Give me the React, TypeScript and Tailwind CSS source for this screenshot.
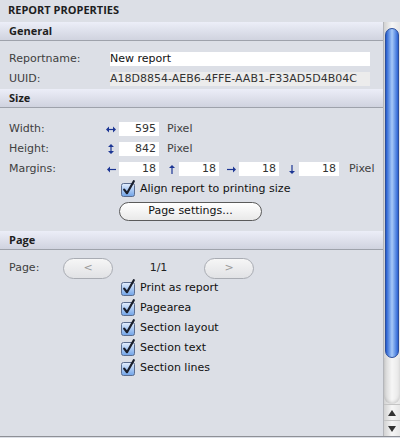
import React from 'react';

const Header = ({ title }: { title: string }) => (
  <div className="h-[19px] flex items-center px-[9px] bg-linear-to-b from-[#eceef8] to-[#d0d3df] border-b border-[#9ea2ab] font-bold text-[#1e1e1e] [font-family:'Open_Sans',sans-serif]">
    {title}
  </div>
);

const Label = ({ children }: { children: React.ReactNode }) => (
  <div className="w-[110px] shrink-0 pl-[9px] text-[#404040]">{children}</div>
);

const Field = ({ value, w }: { value: string; w: string }) => (
  <div className={`${w} h-[14px] bg-white text-right pr-[3px] leading-[14px] text-[#333]`}>{value}</div>
);

const ArrowIcon = ({ dir }: { dir: 'h' | 'v' | 'l' | 'u' | 'r' | 'd' }) => {
  const c = '#1c3694';
  if (dir === 'h')
    return (
      <svg width="10" height="7" viewBox="0 0 10 7">
        <path d="M1 3.5h8" stroke={c} strokeWidth="1.2" />
        <path d="M0 3.5l3-3v6zM10 3.5l-3-3v6z" fill={c} />
      </svg>
    );
  if (dir === 'v')
    return (
      <svg width="6" height="10" viewBox="0 0 6 10">
        <path d="M3 1v8" stroke={c} strokeWidth="1.2" />
        <path d="M3 0l3 3H0zM3 10l3-3H0z" fill={c} />
      </svg>
    );
  if (dir === 'l')
    return (
      <svg width="9" height="7" viewBox="0 0 9 7">
        <path d="M2 3.5h7" stroke={c} strokeWidth="1.2" />
        <path d="M0 3.5l3-3v6z" fill={c} />
      </svg>
    );
  if (dir === 'r')
    return (
      <svg width="9" height="7" viewBox="0 0 9 7">
        <path d="M0 3.5h7" stroke={c} strokeWidth="1.2" />
        <path d="M9 3.5l-3-3v6z" fill={c} />
      </svg>
    );
  if (dir === 'u')
    return (
      <svg width="6" height="9" viewBox="0 0 6 9">
        <path d="M3 2v7" stroke={c} strokeWidth="1.2" />
        <path d="M3 0l3 3H0z" fill={c} />
      </svg>
    );
  return (
    <svg width="6" height="9" viewBox="0 0 6 9">
      <path d="M3 0v7" stroke={c} strokeWidth="1.2" />
      <path d="M3 9l3-3H0z" fill={c} />
    </svg>
  );
};

const Check = ({ label }: { label: string }) => (
  <div className="h-[20px] flex items-center pl-[121px]">
    <svg width="16" height="17" viewBox="0 0 16 17" className="shrink-0 -mt-[2px]">
      <defs>
        <linearGradient id="cb" x1="0" y1="0" x2="0" y2="1">
          <stop offset="0" stopColor="#e4eefc" />
          <stop offset="0.5" stopColor="#a9c9f4" />
          <stop offset="1" stopColor="#6fa2e6" />
        </linearGradient>
      </defs>
      <rect x="0.5" y="3.5" width="13" height="13" rx="2" fill="url(#cb)" stroke="#5a6c8e" />
      <path d="M3.2 9.6l2.8 3.6L12.8 1.2" fill="none" stroke="#1b1f2c" strokeWidth="2.2" strokeLinecap="round" strokeLinejoin="round" />
    </svg>
    <span className="ml-[3px] text-[#111]">{label}</span>
  </div>
);

const Pill = ({ text }: { text: string }) => (
  <div className="w-[50px] h-[21px] shrink-0 rounded-full border border-[#a9acb3] bg-linear-to-b from-[#f6f6f6] to-[#e1e2e5] flex items-center justify-center text-[#9a9a9a]">
    {text}
  </div>
);

export default function App() {
  return (
    <div className="w-[400px] h-[438px] bg-[#dcdfe6] text-[11px] [font-family:'DejaVu_Sans',sans-serif] overflow-hidden flex flex-col">
      <div className="h-[22px] shrink-0 flex items-center pl-[8px] pb-[1px] font-bold text-[#1e1e1e] [font-family:'Open_Sans',sans-serif]">REPORT PROPERTIES</div>
      <div className="h-[414px] flex">
        <div className="w-[383px] flex flex-col">
          <Header title="General" />
          <div className="pt-[8px]">
            <div className="h-[20px] flex items-center">
              <Label>Reportname:</Label>
              <div className="w-[260px] h-[14px] bg-white leading-[14px] text-[#111]">New report</div>
            </div>
            <div className="h-[20px] flex items-center">
              <Label>UUID:</Label>
              <div className="w-[260px] h-[14px] bg-[#ececec] leading-[14px] text-[#333]">A18D8854-AEB6-4FFE-AAB1-F33AD5D4B04C</div>
            </div>
          </div>
          <Header title="Size" />
          <div className="pt-[11px] pb-[10px]">
            <div className="h-[20px] flex items-center">
              <div className="w-[99px] shrink-0 pl-[9px] text-[#404040]">Width:</div>
              <div className="w-[20px] flex justify-end pr-[3px]"><ArrowIcon dir="h" /></div>
              <Field value="595" w="w-[40px]" />
              <span className="ml-[8px] text-[#404040]">Pixel</span>
            </div>
            <div className="h-[20px] flex items-center">
              <div className="w-[99px] shrink-0 pl-[9px] text-[#404040]">Height:</div>
              <div className="w-[20px] flex justify-end pr-[5px]"><ArrowIcon dir="v" /></div>
              <Field value="842" w="w-[40px]" />
              <span className="ml-[8px] text-[#404040]">Pixel</span>
            </div>
            <div className="h-[20px] flex items-center">
              <div className="w-[99px] shrink-0 pl-[9px] text-[#404040]">Margins:</div>
              <div className="w-[20px] flex justify-end pr-[3px]"><ArrowIcon dir="l" /></div>
              <Field value="18" w="w-[40px]" />
              <div className="w-[20px] flex justify-end pr-[4px]"><ArrowIcon dir="u" /></div>
              <Field value="18" w="w-[40px]" />
              <div className="w-[20px] flex justify-end pr-[3px]"><ArrowIcon dir="r" /></div>
              <Field value="18" w="w-[40px]" />
              <div className="w-[20px] flex justify-end pr-[4px]"><ArrowIcon dir="d" /></div>
              <Field value="18" w="w-[40px]" />
              <span className="ml-[10px] text-[#404040]">Pixel</span>
            </div>
            <Check label="Align report to printing size" />
            <div className="mt-[3px] ml-[119px] w-[143px] h-[19px] rounded-full border border-[#5b5b5b] bg-linear-to-b from-[#ffffff] to-[#e9e9e9] flex items-center justify-center text-[#111]">
              Page settings...
            </div>
          </div>
          <Header title="Page" />
          <div className="pt-[8px]">
            <div className="h-[20px] flex items-center">
              <div className="w-[63px] shrink-0 pl-[9px] text-[#404040]">Page:</div>
              <Pill text="<" />
              <div className="w-[91px] text-center text-[#222]">1/1</div>
              <Pill text=">" />
            </div>
            <Check label="Print as report" />
            <Check label="Pagearea" />
            <Check label="Section layout" />
            <Check label="Section text" />
            <Check label="Section lines" />
          </div>
        </div>
        <div className="w-[17px] flex flex-col border-l border-[#b4b6bb] bg-linear-to-r from-[#d2d2d2] via-[#f6f6f6] to-[#e6e6e6]">
          <div className="h-[6px]" />
          <div className="h-[330px] mx-[1px] rounded-full border border-[#2b4e9c] bg-linear-to-r from-[#2459cc] via-[#a6c9f8] to-[#2d63d3]" />
          <div className="flex-1 rounded-b-full shadow-[inset_0_-2px_3px_rgba(0,0,0,0.12)]" />
          <div className="h-[16px] border-t border-[#c4c4c4] flex items-center justify-center">
            <svg width="8" height="6" viewBox="0 0 8 6"><path d="M4 0l4 6H0z" fill="#333" /></svg>
          </div>
          <div className="h-[16px] border-t border-[#c4c4c4] flex items-center justify-center">
            <svg width="8" height="6" viewBox="0 0 8 6"><path d="M4 6l4-6H0z" fill="#333" /></svg>
          </div>
        </div>
      </div>
      <div className="h-px bg-[#8e9096]" />
    </div>
  );
}
